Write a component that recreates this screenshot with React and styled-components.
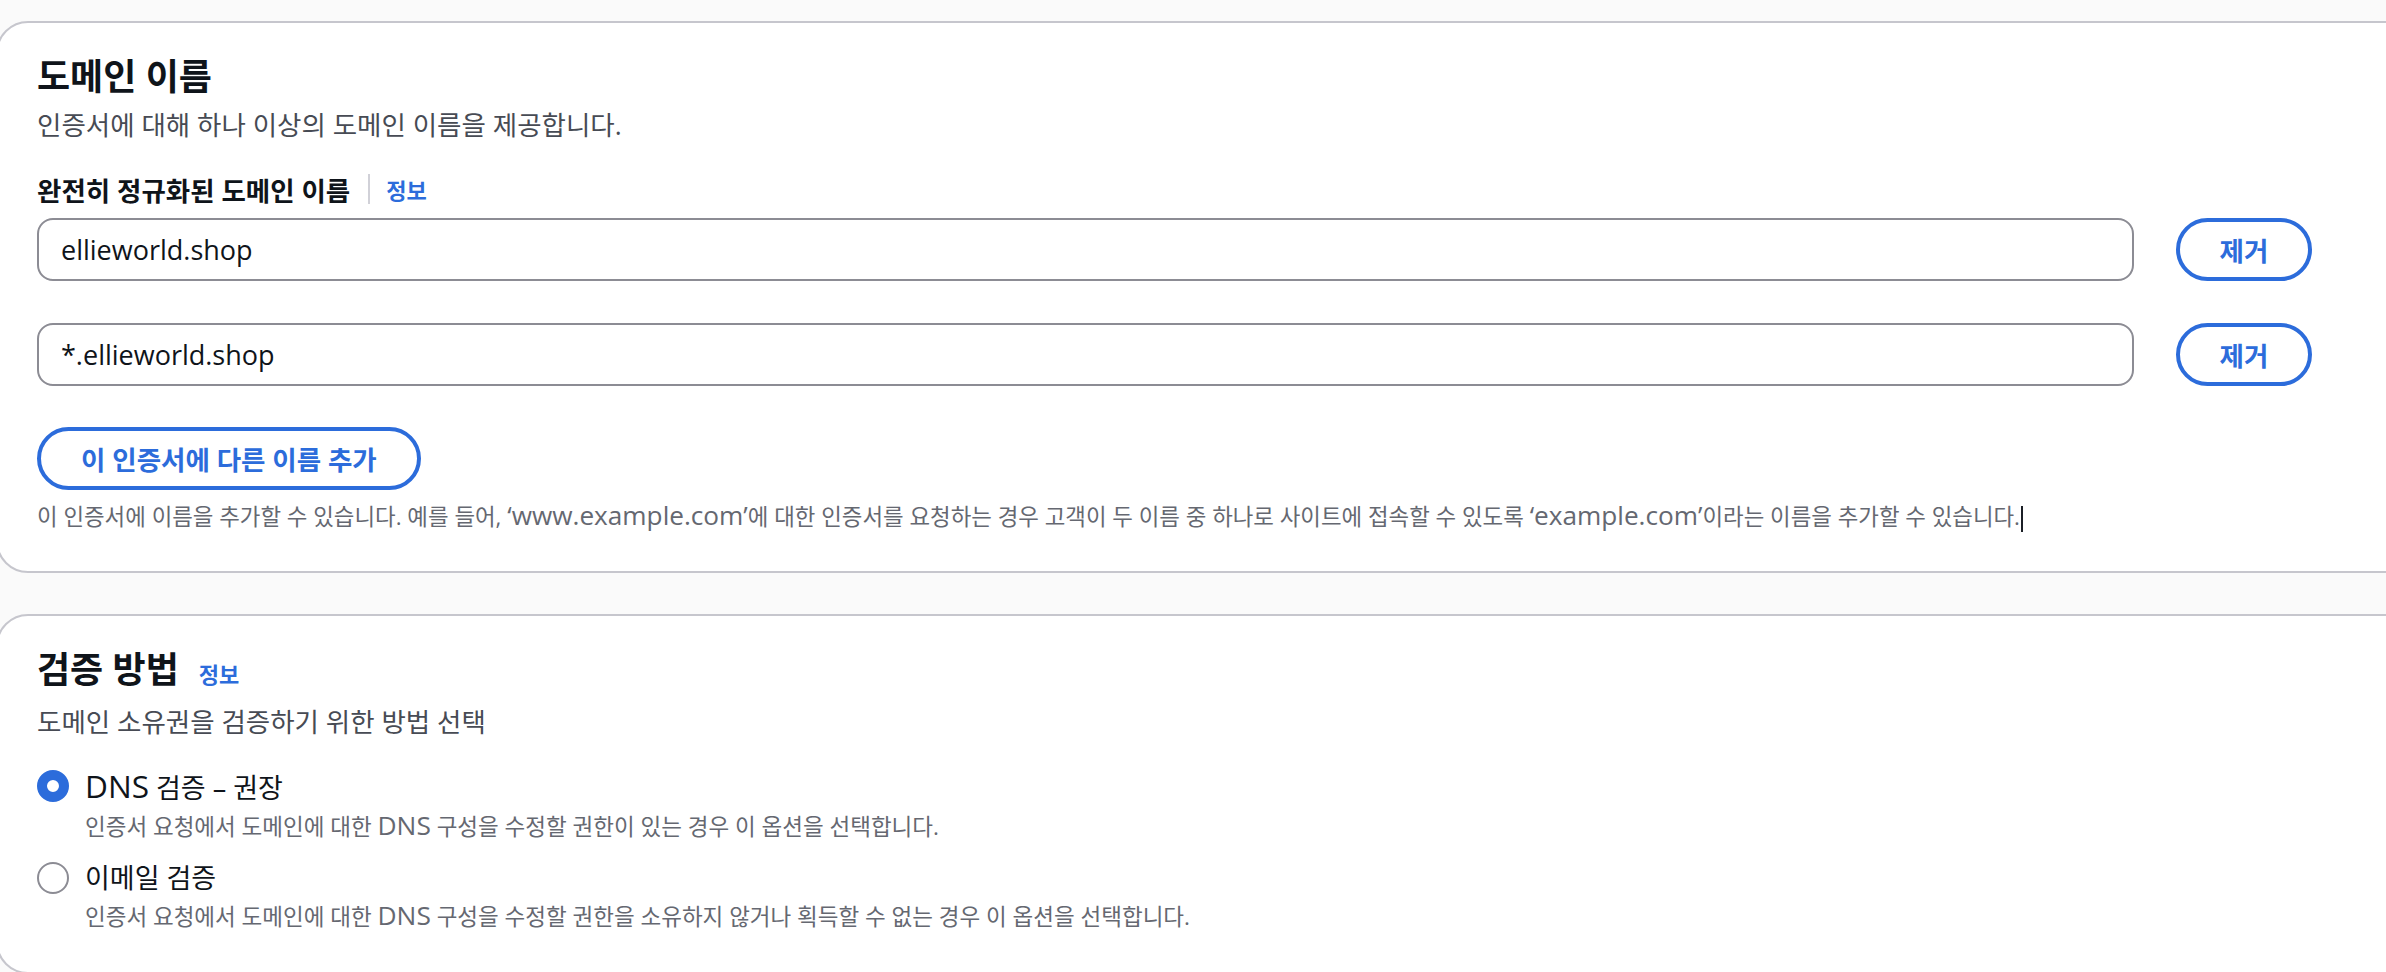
import React from 'react';
import styled, { createGlobalStyle } from 'styled-components';

const GlobalStyle = createGlobalStyle`
  html, body { margin: 0; padding: 0; background: #fafafa; overflow: hidden; }
  body { font-family: "Open Sans", "Noto Sans CJK KR", sans-serif; color: #0f141a; }
  *, *::before, *::after { box-sizing: border-box; }
`;

const BLUE = '#2c6cdb';

const Page = styled.main`
  width: 2386px;
  height: 972px;
  overflow: hidden;
  display: flex;
  flex-direction: column;
  gap: 41px;
  padding-top: 21px;
`;

const Card = styled.section`
  flex: none;
  margin-left: -4px;
  width: calc(100% + 80px);
  background: #ffffff;
  border: 2px solid #c6c6cd;
  border-radius: 32px;
  padding: 32px 0 ${p => p.$pb || 39}px 39px;
`;

const Heading = styled.h2`
  margin: 0;
  display: flex;
  align-items: baseline;
  gap: 20px;
  font-size: 36px;
  line-height: 44px;
  font-weight: 700;
  color: #0f141a;
`;

const Description = styled.p`
  margin: 9px 0 0;
  font-size: 26.5px;
  line-height: 34px;
  color: #474b54;
`;

const InfoLink = styled.a`
  font-size: 22px;
  font-weight: 700;
  color: ${BLUE};
  text-decoration: none;
`;

const En = styled.span`
  font-size: 1.17em;
`;

const FieldGroup = styled.div`
  margin-top: 30px;
  max-width: 2275px;
`;

const LabelRow = styled.div`
  display: flex;
  align-items: center;
  height: 34px;
`;

const LabelText = styled.label`
  font-size: 26.5px;
  font-weight: 700;
  color: #0f141a;
`;

const Divider = styled.span`
  width: 2px;
  height: 30px;
  background: #d1d1d8;
  margin: 0 16px 0 18px;
`;

const Rows = styled.div`
  margin-top: 12px;
  display: flex;
  flex-direction: column;
  gap: 42px;
`;

const Row = styled.div`
  display: grid;
  grid-template-columns: 1fr 136px;
  column-gap: 42px;
`;

const TextInput = styled.input`
  height: 63px;
  width: 100%;
  border: 2px solid #8c8c94;
  border-radius: 16px;
  padding: 0 22px;
  font-family: "Open Sans", sans-serif;
  font-size: 27px;
  color: #0f141a;
  background: #fff;
  outline: none;
`;

const Button = styled.button`
  height: 63px;
  padding: 0 ${p => (p.$compact ? 0 : 40)}px;
  border: 4px solid ${BLUE};
  border-radius: 32px;
  background: #fff;
  color: ${BLUE};
  font-family: "Open Sans", "Noto Sans CJK KR", sans-serif;
  font-size: 26.5px;
  font-weight: 700;
  cursor: pointer;
  display: inline-flex;
  align-items: center;
  justify-content: center;
`;

const AddButton = styled(Button)`
  margin-top: 41px;
`;

const Constraint = styled.p`
  margin: 10px 0 0;
  font-size: 22.4px;
  line-height: 30px;
  color: #656871;
  white-space: nowrap;
`;

const Caret = styled.span`
  display: inline-block;
  width: 2px;
  height: 26px;
  background: #1b1f26;
  vertical-align: middle;
  margin-left: 1px;
`;

const RadioGroup = styled.div`
  margin-top: 30px;
  display: flex;
  flex-direction: column;
  gap: 19px;
`;

const RadioOption = styled.label`
  display: grid;
  grid-template-columns: 32px 1fr;
  column-gap: 16px;
  cursor: pointer;
`;

const RadioCircle = styled.span`
  width: 32px;
  height: 32px;
  margin-top: 1px;
  border-radius: 50%;
  background: #fff;
  border: ${p => (p.$checked ? `10px solid ${BLUE}` : '2px solid #8c8c94')};
`;

const RadioLabel = styled.span`
  font-size: 27px;
  line-height: 34px;
  color: #0f141a;
`;

const RadioDesc = styled.span`
  grid-column: 2;
  margin-top: 5px;
  font-size: 22.5px;
  line-height: 30px;
  color: #656871;
`;

const domains = ['ellieworld.shop', '*.ellieworld.shop'];

const methods = [
  {
    label: (
      <>
        <En>DNS</En> 검증 – 권장
      </>
    ),
    desc: (
      <>
        인증서 요청에서 도메인에 대한 <En>DNS</En> 구성을 수정할 권한이 있는 경우 이 옵션을 선택합니다.
      </>
    ),
    checked: true,
  },
  {
    label: '이메일 검증',
    desc: (
      <>
        인증서 요청에서 도메인에 대한 <En>DNS</En> 구성을 수정할 권한을 소유하지 않거나 획득할 수 없는 경우 이 옵션을 선택합니다.
      </>
    ),
    checked: false,
  },
];

export default function App() {
  return (
    <>
      <GlobalStyle />
      <Page>
        <Card>
          <Heading>도메인 이름</Heading>
          <Description>인증서에 대해 하나 이상의 도메인 이름을 제공합니다.</Description>
          <FieldGroup>
            <LabelRow>
              <LabelText>완전히 정규화된 도메인 이름</LabelText>
              <Divider />
              <InfoLink href="#">정보</InfoLink>
            </LabelRow>
            <Rows>
              {domains.map(d => (
                <Row key={d}>
                  <TextInput readOnly value={d} />
                  <Button $compact>제거</Button>
                </Row>
              ))}
            </Rows>
            <AddButton>이 인증서에 다른 이름 추가</AddButton>
            <Constraint>
              이 인증서에 이름을 추가할 수 있습니다. 예를 들어, <En>‘www.example.com’</En>에 대한 인증서를 요청하는 경우 고객이 두 이름 중 하나로 사이트에 접속할 수 있도록 <En>‘example.com’</En>이라는 이름을 추가할 수 있습니다.
              <Caret />
            </Constraint>
          </FieldGroup>
        </Card>
        <Card $pb={40}>
          <Heading>
            검증 방법
            <InfoLink href="#">정보</InfoLink>
          </Heading>
          <Description>도메인 소유권을 검증하기 위한 방법 선택</Description>
          <RadioGroup>
            {methods.map((m, i) => (
              <RadioOption key={i}>
                <RadioCircle $checked={m.checked} />
                <RadioLabel>{m.label}</RadioLabel>
                <RadioDesc>{m.desc}</RadioDesc>
              </RadioOption>
            ))}
          </RadioGroup>
        </Card>
      </Page>
    </>
  );
}
